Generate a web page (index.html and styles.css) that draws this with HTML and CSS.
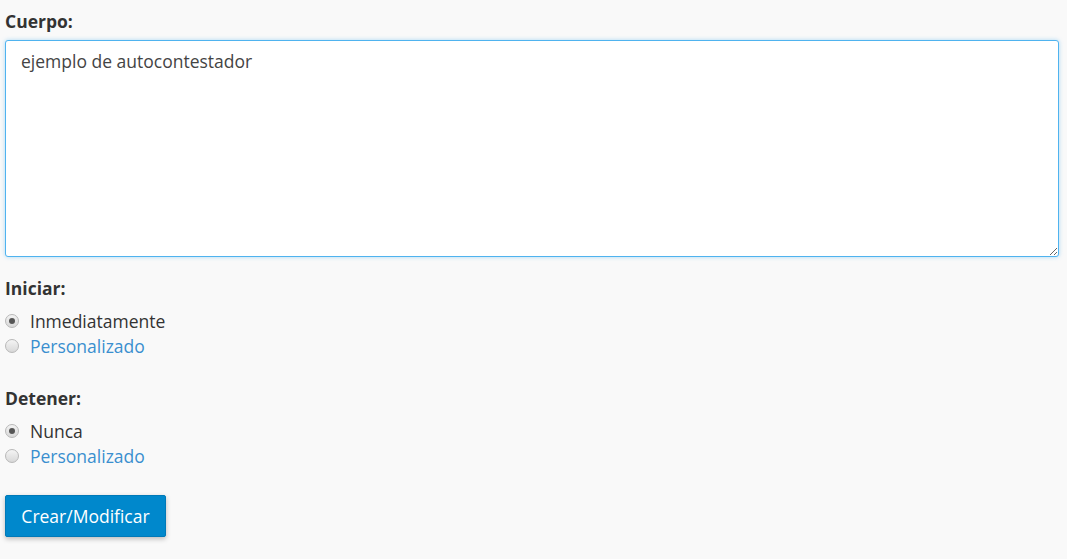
FILE: index.html
```html
<!DOCTYPE html>
<html lang="es">
<head>
<meta charset="utf-8">
<link rel="stylesheet" href="styles.css">
</head>
<body>
<form class="form">
  <div class="field">
    <label class="label">Cuerpo:</label>
    <textarea class="body-input" spellcheck="true">ejemplo de autocontestador</textarea>
  </div>
  <div class="field group">
    <div class="label">Iniciar:</div>
    <label class="option"><span class="radio checked"></span><span class="opt-text">Inmediatamente</span></label>
    <label class="option"><span class="radio"></span><span class="opt-text link">Personalizado</span></label>
  </div>
  <div class="field group group-next">
    <div class="label">Detener:</div>
    <label class="option"><span class="radio checked"></span><span class="opt-text">Nunca</span></label>
    <label class="option"><span class="radio"></span><span class="opt-text link">Personalizado</span></label>
  </div>
  <button type="button" class="btn">Crear/Modificar</button>
</form>
</body>
</html>
```
FILE: styles.css
```css
html, body {
  margin: 0;
  padding: 0;
  background: #f9f9f9;
}
body {
  font-family: "Open Sans", "Liberation Sans", sans-serif;
  color: #333;
  width: 1067px;
  height: 559px;
  overflow: hidden;
}
.form {
  padding: 10px 8px 0 5px;
  display: flex;
  flex-direction: column;
  align-items: flex-start;
}
.field {
  display: flex;
  flex-direction: column;
  width: 100%;
}
.label {
  font-size: 17.5px;
  font-weight: 700;
  line-height: 22px;
  color: #333;
  margin-bottom: 8px;
}
.body-input {
  box-sizing: border-box;
  width: 1054px;
  height: 217px;
  border: 1px solid #4fb3ef;
  border-radius: 3px;
  box-shadow: 0 0 4px rgba(79, 179, 239, 0.45);
  background: #fff;
  font-family: "Open Sans", "Liberation Sans", sans-serif;
  font-size: 17.5px;
  line-height: 22px;
  color: #444;
  padding: 9px 15px;
  resize: vertical;
  outline: none;
}
.group {
  margin-top: 20px;
}
.group-next {
  margin-top: 29px;
}
.group .label {
  margin-bottom: 9px;
}
.option {
  display: flex;
  align-items: center;
  height: 25px;
  font-size: 17.5px;
  cursor: pointer;
}
.radio {
  box-sizing: border-box;
  width: 14px;
  height: 14px;
  border-radius: 50%;
  border: 1px solid #b8b8b8;
  background: linear-gradient(#f4f4f4, #d8d8d8);
  margin-right: 11px;
  position: relative;
  flex: none;
}
.radio.checked::after {
  content: "";
  position: absolute;
  left: 3px;
  top: 3px;
  width: 6px;
  height: 6px;
  border-radius: 50%;
  background: #555;
}
.opt-text {
  color: #333;
}
.opt-text.link {
  color: #3a8fcf;
}
.btn {
  margin-top: 27px;
  height: 42px;
  width: 161px;
  background: #0088cc;
  color: #fff;
  border: 1px solid #0079b8;
  border-radius: 2px;
  font-family: "Open Sans", "Liberation Sans", sans-serif;
  font-size: 17.5px;
  box-shadow: 0 2px 5px rgba(0, 0, 0, 0.25);
  padding: 0;
  cursor: pointer;
}
```
